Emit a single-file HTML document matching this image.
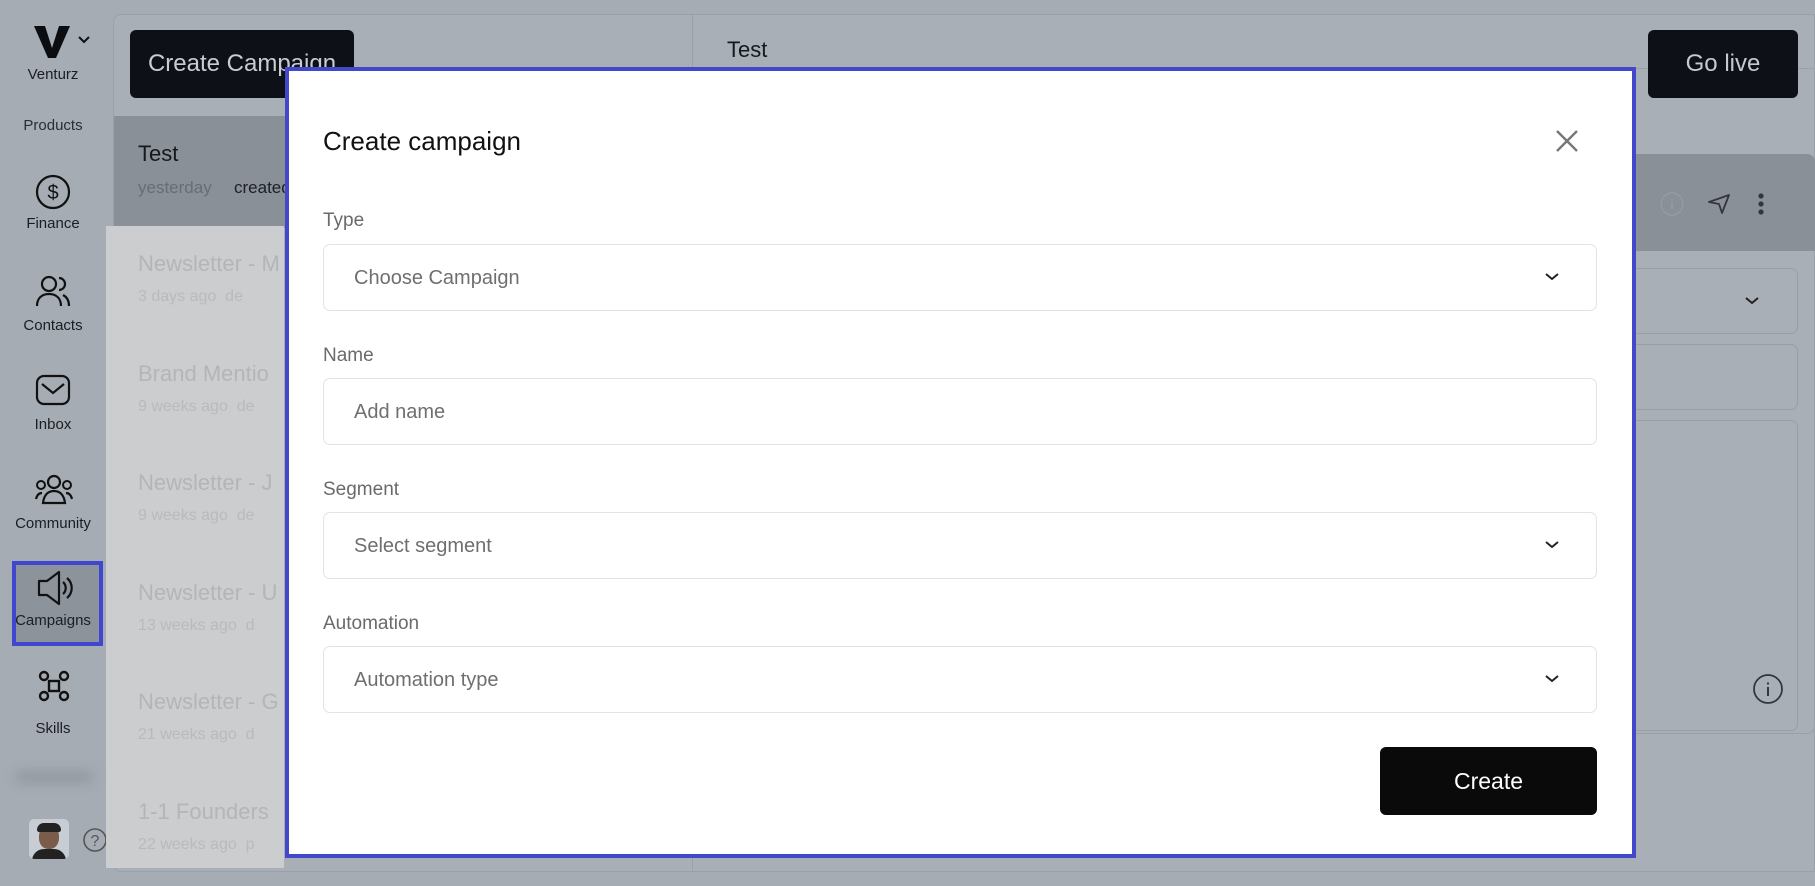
<!DOCTYPE html>
<html><head><style>
*{margin:0;padding:0;box-sizing:border-box}
body{width:1815px;height:886px;overflow:hidden;background:#a6acb4;font-family:"Liberation Sans",sans-serif;position:relative}
.abs{position:absolute}
.side{left:0;top:0;width:106px;height:886px;background:#a6acb4}
.sl{position:absolute;left:0;width:106px;text-align:center;font-size:15px;color:#1b1e22}
.ico{position:absolute;left:35px}
.f{position:absolute;border:1px solid #e3e3e3;border-radius:7px;background:#fff;left:323px;width:1274px;height:67px}
.f span{position:absolute;left:30px;top:22px;font-size:20px;color:#6f6f6f}
.lbl{position:absolute;left:323px;font-size:19px;color:#6a6a6a}
.chev{position:absolute;right:36px;top:27px}
.nl{position:absolute;left:138px;font-size:22px;color:#b3b6b9;white-space:nowrap}
.ns{position:absolute;left:138px;font-size:16px;color:#b8bbbe;white-space:nowrap}
</style></head><body>
<div class="abs side"></div>
<!-- sidebar -->
<svg class="abs" style="left:34px;top:26px" width="36" height="32" viewBox="0 0 36 32"><path d="M0 0h11l7 22 7-22h11L22 32h-8z" fill="#0b0d10"/></svg>
<svg class="abs" style="left:77px;top:35px" width="14" height="10"><path d="M2 2l5 5 5-5" stroke="#111" stroke-width="2" fill="none"/></svg>
<div class="sl" style="top:66px">Venturz</div>
<div class="sl" style="top:117px;color:#2a2d31">Products</div>
<svg class="ico" style="top:174px" width="36" height="36" viewBox="0 0 36 36"><circle cx="18" cy="18" r="16" stroke="#111" stroke-width="2.2" fill="none"/><text x="18" y="25" text-anchor="middle" font-size="20" font-family="Liberation Sans" fill="#111">$</text></svg>
<div class="sl" style="top:215px">Finance</div>
<svg class="ico" style="top:274px" width="36" height="34" viewBox="0 0 36 34"><circle cx="14" cy="10" r="7" stroke="#111" stroke-width="2.2" fill="none"/><path d="M2 32c0-8 5-12 12-12s12 4 12 12M24 4a6 6 0 0 1 0 12M28 21c4 2 6 6 6 11" stroke="#111" stroke-width="2.2" fill="none"/></svg>
<div class="sl" style="top:317px">Contacts</div>
<svg class="ico" style="top:374px" width="36" height="32" viewBox="0 0 36 32"><rect x="2" y="2" width="32" height="28" rx="7" stroke="#111" stroke-width="2.2" fill="none"/><path d="M7 10l11 9 11-9" stroke="#111" stroke-width="2.2" fill="none"/></svg>
<div class="sl" style="top:416px">Inbox</div>
<svg class="ico" style="top:472px" width="38" height="34" viewBox="0 0 38 34"><circle cx="19" cy="10" r="6" stroke="#111" stroke-width="2.2" fill="none"/><circle cx="6" cy="13" r="4" stroke="#111" stroke-width="2" fill="none"/><circle cx="32" cy="13" r="4" stroke="#111" stroke-width="2" fill="none"/><path d="M8 31c1-8 5-12 11-12s10 4 11 12zM1 27c1-4 3-6 6-6M37 27c-1-4-3-6-6-6" stroke="#111" stroke-width="2.2" fill="none"/></svg>
<div class="sl" style="top:515px">Community</div>
<div class="abs" style="left:12px;top:561px;width:91px;height:85px;border:4px solid #4146cf;background:#8d939b"></div>
<svg class="ico" style="left:36px;top:570px" width="38" height="36" viewBox="0 0 38 36"><path d="M3 11h8l12-9v32l-12-9H3z" stroke="#111" stroke-width="2.2" fill="none" stroke-linejoin="round"/><path d="M27 12a8 8 0 0 1 0 12M31 8a13 13 0 0 1 0 20" stroke="#111" stroke-width="2.2" fill="none"/></svg>
<div class="sl" style="top:612px">Campaigns</div>
<svg class="ico" style="left:38px;top:670px" width="32" height="32" viewBox="0 0 32 32"><circle cx="6" cy="6" r="4" stroke="#111" stroke-width="2.4" fill="none"/><circle cx="26" cy="6" r="4" stroke="#111" stroke-width="2.4" fill="none"/><circle cx="6" cy="26" r="4" stroke="#111" stroke-width="2.4" fill="none"/><circle cx="26" cy="26" r="4" stroke="#111" stroke-width="2.4" fill="none"/><rect x="11" y="11" width="10" height="10" stroke="#111" stroke-width="2.4" fill="none"/></svg>
<div class="sl" style="top:720px">Skills</div>
<div class="abs" style="left:16px;top:772px;width:76px;height:10px;background:#8f959c;filter:blur(6px)"></div>
<div class="abs" style="left:29px;top:819px;width:40px;height:40px;border-radius:5px;background:#c8cdd3;overflow:hidden"><div style="position:absolute;left:10px;top:6px;width:20px;height:24px;border-radius:45%;background:#7a5c4a"></div><div style="position:absolute;left:8px;top:4px;width:24px;height:9px;border-radius:10px 10px 3px 3px;background:#222"></div><div style="position:absolute;left:3px;top:30px;width:34px;height:14px;border-radius:12px 12px 0 0;background:#222"></div></div>
<svg class="abs" style="left:82px;top:827px" width="26" height="26"><circle cx="13" cy="13" r="11" stroke="#555" stroke-width="1.6" fill="none"/><text x="13" y="19" text-anchor="middle" font-size="16" font-family="Liberation Sans" fill="#555">?</text></svg>

<!-- left panel -->
<div class="abs" style="left:113px;top:14px;width:580px;height:858px;background:#a9afb6;border-radius:8px 0 0 8px;border:1px solid #9aa0a8"></div>
<div class="abs" style="left:130px;top:30px;width:224px;height:68px;background:#0d1117;border-radius:6px;color:#c9ccd0;font-size:24px;line-height:68px;text-align:center">Create Campaign</div>
<div class="abs" style="left:114px;top:116px;width:578px;height:112px;background:#8a9098"></div>
<div class="abs" style="left:138px;top:141px;font-size:22px;color:#16191c">Test</div>
<div class="abs" style="left:138px;top:178px;font-size:17px;color:#686d74">yesterday</div>
<div class="abs" style="left:234px;top:178px;font-size:17px;color:#1d2024">created</div>
<div class="abs" style="left:106px;top:226px;width:178px;height:642px;background:#cbcdcf;overflow:hidden">
<div class="nl" style="top:25px;left:32px">Newsletter - M</div><div class="ns" style="top:62px;left:32px">3 days ago &nbsp;de</div>
<div class="nl" style="top:135px;left:32px">Brand Mentio</div><div class="ns" style="top:172px;left:32px">9 weeks ago &nbsp;de</div>
<div class="nl" style="top:244px;left:32px">Newsletter - J</div><div class="ns" style="top:281px;left:32px">9 weeks ago &nbsp;de</div>
<div class="nl" style="top:354px;left:32px">Newsletter - U</div><div class="ns" style="top:391px;left:32px">13 weeks ago &nbsp;d</div>
<div class="nl" style="top:463px;left:32px">Newsletter - G</div><div class="ns" style="top:500px;left:32px">21 weeks ago &nbsp;d</div>
<div class="nl" style="top:573px;left:32px">1-1 Founders</div><div class="ns" style="top:610px;left:32px">22 weeks ago &nbsp;p</div>
</div>
<!-- right panel -->
<div class="abs" style="left:693px;top:14px;width:1122px;height:858px;background:#a9afb6;border:1px solid #9aa0a8;border-left:none"></div>
<div class="abs" style="left:727px;top:37px;font-size:22px;color:#16191c">Test</div>
<div class="abs" style="left:693px;top:68px;width:1122px;height:1px;background:#9aa0a8"></div>
<div class="abs" style="left:1648px;top:30px;width:150px;height:68px;background:#0d1117;border-radius:6px;color:#c6c9cd;font-size:24px;line-height:68px;text-align:center">Go live</div>
<div class="abs" style="left:1600px;top:154px;width:215px;height:580px;border:1px solid #9aa0a8;border-radius:8px"></div>
<div class="abs" style="left:1600px;top:154px;width:215px;height:97px;background:#8a9098;border-radius:8px 8px 0 0"></div>
<svg class="abs" style="left:1659px;top:191px" width="26" height="26"><circle cx="13" cy="13" r="11" stroke="#959ba2" stroke-width="1.5" fill="none"/><path d="M13 11v7M13 8v1" stroke="#959ba2" stroke-width="1.5"/></svg>
<svg class="abs" style="left:1707px;top:193px" width="24" height="22"><path d="M2 9L22 2 15 20 12 11z" stroke="#33373c" stroke-width="1.8" fill="none" stroke-linejoin="round"/></svg>
<svg class="abs" style="left:1756px;top:191px" width="10" height="26"><circle cx="5" cy="5" r="2.6" fill="#33373c"/><circle cx="5" cy="13" r="2.6" fill="#33373c"/><circle cx="5" cy="21" r="2.6" fill="#33373c"/></svg>
<div class="abs" style="left:1600px;top:268px;width:198px;height:66px;border:1px solid #989ea5;border-radius:7px"></div>
<svg class="abs" style="left:1744px;top:296px" width="16" height="10"><path d="M2 2l6 5 6-5" stroke="#222" stroke-width="2" fill="none"/></svg>
<div class="abs" style="left:1600px;top:344px;width:198px;height:66px;border:1px solid #989ea5;border-radius:7px"></div>
<div class="abs" style="left:1600px;top:420px;width:198px;height:311px;border:1px solid #989ea5;border-radius:7px"></div>
<svg class="abs" style="left:1752px;top:673px" width="32" height="32"><circle cx="16" cy="16" r="14" stroke="#33373c" stroke-width="1.8" fill="none"/><path d="M16 14v9M16 9.5v2" stroke="#33373c" stroke-width="2"/></svg>

<!-- modal -->
<div class="abs" style="left:285px;top:67px;width:1351px;height:791px;border:4px solid #4347c9;background:#fff"></div>
<div class="abs" style="left:323px;top:126px;font-size:26px;color:#111">Create campaign</div>
<svg class="abs" style="left:1555px;top:129px" width="24" height="24"><path d="M2 2l20 20M22 2L2 22" stroke="#777" stroke-width="2.4"/></svg>
<div class="lbl" style="top:210px">Type</div>
<div class="f" style="top:244px"><span>Choose Campaign</span><svg class="chev" width="16" height="10"><path d="M2 2l6 5 6-5" stroke="#222" stroke-width="2" fill="none"/></svg></div>
<div class="lbl" style="top:345px">Name</div>
<div class="f" style="top:378px"><span>Add name</span></div>
<div class="lbl" style="top:479px">Segment</div>
<div class="f" style="top:512px"><span>Select segment</span><svg class="chev" width="16" height="10"><path d="M2 2l6 5 6-5" stroke="#222" stroke-width="2" fill="none"/></svg></div>
<div class="lbl" style="top:613px">Automation</div>
<div class="f" style="top:646px"><span>Automation type</span><svg class="chev" width="16" height="10"><path d="M2 2l6 5 6-5" stroke="#222" stroke-width="2" fill="none"/></svg></div>
<div class="abs" style="left:1380px;top:747px;width:217px;height:68px;background:#0a0a0a;border-radius:6px;color:#fff;font-size:23px;line-height:68px;text-align:center">Create</div>
</body></html>
